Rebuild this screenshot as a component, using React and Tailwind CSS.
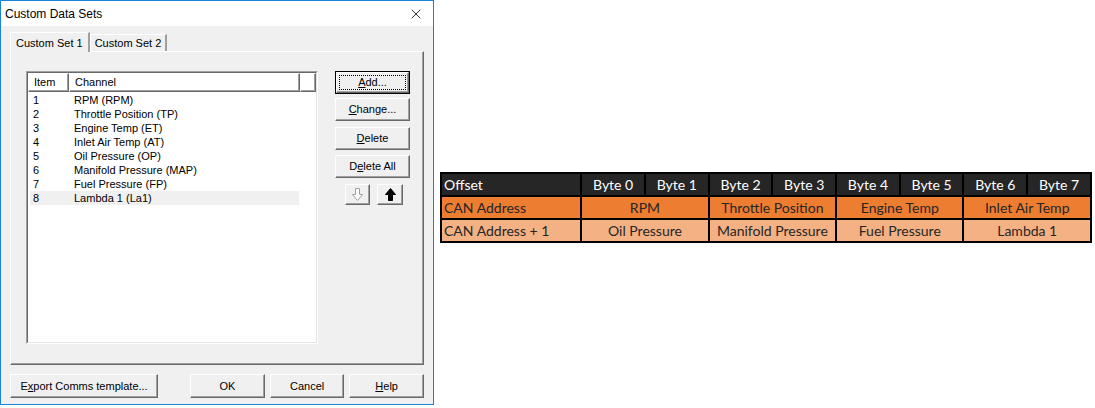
import { X } from 'lucide-react';

const channels = [
  'RPM (RPM)',
  'Throttle Position (TP)',
  'Engine Temp (ET)',
  'Inlet Air Temp (AT)',
  'Oil Pressure (OP)',
  'Manifold Pressure (MAP)',
  'Fuel Pressure (FP)',
  'Lambda 1 (La1)',
];

const raised = 'border border-t-white border-l-white border-r-[#696969] border-b-[#696969] shadow-[inset_-1px_-1px_#a0a0a0]';

function Btn({ children, className = '' }) {
  return (
    <div className={`flex items-center justify-center bg-[#f0f0f0] text-[11px] text-black ${raised} ${className}`}>
      {children}
    </div>
  );
}

function ArrowDown() {
  return (
    <svg width="11" height="13" viewBox="0 0 11 13">
      <path d="M3.5 0.5h4v6h3l-5 6-5-6h3z" fill="white" stroke="#a0a0a0" />
    </svg>
  );
}

function ArrowUp() {
  return (
    <svg width="11" height="13" viewBox="0 0 11 13">
      <path d="M5.5 0.5l5 6h-3v6h-4v-6h-3z" fill="black" stroke="black" />
    </svg>
  );
}

function Dialog() {
  return (
    <div className="w-[434px] h-[405px] border border-[#1883d7] bg-[#f0f0f0] flex flex-col shrink-0 font-['Liberation_Sans',Arial,sans-serif]">
      <div className="h-[25px] bg-white flex items-center justify-between pl-[4px] pr-[9px]">
        <span className="text-[12px] text-black">Custom Data Sets</span>
        <X size={16} strokeWidth={1.2} className="text-black" />
      </div>

      <div className="flex items-end pl-[9px] mt-[5px] h-[20px]">
        <div className="h-[20px] px-[5px] flex items-start pt-[2px] text-[11px] border-t border-l border-white border-r-2 border-r-[#a0a0a0] bg-[#f0f0f0] relative z-10 mb-[-1px]">
          Custom Set 1
        </div>
        <div className="h-[17px] px-[4px] flex items-center text-[11px] border-t border-l border-white border-r-2 border-r-[#a0a0a0]">
          Custom Set 2
        </div>
      </div>

      <div className="mx-[9px] h-[314px] border border-t-white border-l-white border-r-[#696969] border-b-[#696969] shadow-[inset_-1px_-1px_#a0a0a0] flex pt-[19px] pl-[15px]">
        <div className="w-[292px] h-[273px] border border-t-[#a0a0a0] border-l-[#a0a0a0] border-r-white border-b-white">
          <div className="w-full h-full border border-t-[#696969] border-l-[#696969] border-r-[#e3e3e3] border-b-[#e3e3e3] bg-white">
            <div className="flex h-[19px] text-[11px]">
              <div className={`w-[41px] pl-[5px] flex items-center ${raised}`}>Item</div>
              <div className={`w-[231px] pl-[5px] flex items-center ${raised}`}>Channel</div>
              <div className={`flex-1 ${raised}`} />
            </div>
            <div className="pt-[1px] text-[11px] leading-[14px]">
              {channels.map((c, i) => (
                <div key={i} className={`flex h-[14px] ml-[2px] mr-[17px] ${i === 7 ? 'bg-[#f0f0f0]' : ''}`}>
                  <span className="w-[44px] pl-[3px]">{i + 1}</span>
                  <span>{c}</span>
                </div>
              ))}
            </div>
          </div>
        </div>

        <div className="ml-[17px] flex flex-col w-[75px]">
          <div className="h-[23px] border border-black">
            <Btn className="h-full p-[2px]">
              <div className="w-full h-full border border-dotted border-black flex items-center justify-center"><span><u>A</u>dd...</span></div>
            </Btn>
          </div>
          <Btn className="h-[23px] mt-[4px]"><span><u>C</u>hange...</span></Btn>
          <Btn className="h-[23px] mt-[6px]"><span><u>D</u>elete</span></Btn>
          <Btn className="h-[23px] mt-[5px]"><span>D<u>e</u>lete All</span></Btn>
          <div className="flex gap-[7px] mt-[6px] pl-[10px]">
            <Btn className="w-[25px] h-[21px]"><ArrowDown /></Btn>
            <Btn className="w-[26px] h-[21px]"><ArrowUp /></Btn>
          </div>
        </div>
      </div>

      <div className="flex mt-[9px] px-[9px] h-[24px]">
        <Btn className="w-[149px]"><span>E<u>x</u>port Comms template...</span></Btn>
        <Btn className="w-[75px] ml-[32px]"><span>OK</span></Btn>
        <Btn className="w-[75px] ml-[5px]"><span>Cancel</span></Btn>
        <Btn className="w-[75px] ml-[5px]"><span><u>H</u>elp</span></Btn>
      </div>
    </div>
  );
}

const rows = [
  { label: 'CAN Address', cells: ['RPM', 'Throttle Position', 'Engine Temp', 'Inlet Air Temp'], bg: 'bg-[#ed7d31]' },
  { label: 'CAN Address + 1', cells: ['Oil Pressure', 'Manifold Pressure', 'Fuel Pressure', 'Lambda 1'], bg: 'bg-[#f4b183]' },
];

function CanTable() {
  return (
    <table className="ml-[6px] mt-[172px] w-[652px] border-collapse text-[14px] font-['Lato',sans-serif] self-start">
      <tbody>
        <tr className="h-[22px] bg-[#262626] text-white">
          <td className="border-2 border-black pl-[2px] w-[141px]">Offset</td>
          {[0, 1, 2, 3, 4, 5, 6, 7].map((b) => (
            <td key={b} className="border-2 border-black text-center w-[64px]">Byte {b}</td>
          ))}
        </tr>
        {rows.map((r) => (
          <tr key={r.label} className={`h-[22px] ${r.bg} text-[#262626]`}>
            <td className="border-2 border-black pl-[2px]">{r.label}</td>
            {r.cells.map((c) => (
              <td key={c} colSpan={2} className="border-2 border-black text-center">{c}</td>
            ))}
          </tr>
        ))}
      </tbody>
    </table>
  );
}

export default function App() {
  return (
    <div className="w-[1095px] h-[408px] bg-white flex">
      <Dialog />
      <CanTable />
    </div>
  );
}
